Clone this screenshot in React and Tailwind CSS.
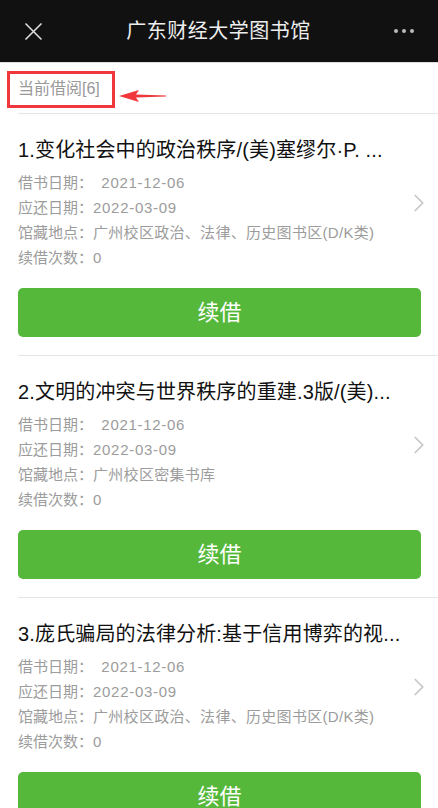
import { ChevronRight } from 'lucide-react';

const books = [
  {
    title: '1.变化社会中的政治秩序/(美)塞缪尔·P. ...',
    lent: '2021-12-06',
    due: '2022-03-09',
    place: '广州校区政治、法律、历史图书区(D/K类)',
    renew: 0,
  },
  {
    title: '2.文明的冲突与世界秩序的重建.3版/(美)...',
    lent: '2021-12-06',
    due: '2022-03-09',
    place: '广州校区密集书库',
    renew: 0,
  },
  {
    title: '3.庞氏骗局的法律分析:基于信用博弈的视...',
    lent: '2021-12-06',
    due: '2022-03-09',
    place: '广州校区政治、法律、历史图书区(D/K类)',
    renew: 0,
  },
];

function BookItem({ book }) {
  return (
    <div className="border-b border-[#e5e5e5] pt-[22px] pb-[18px] pr-[17px]">
      <div className="flex items-center">
        <div className="flex-1 min-w-0">
          <p className="text-[20px] leading-[28px] text-[#111] whitespace-nowrap overflow-hidden tracking-[0.15px]">{book.title}</p>
          <div className="mt-[6px] text-[15px] leading-[25px] text-[#9c9c9c]">
            <p>借书日期：&nbsp;&nbsp;<span className="tracking-[0.7px]">{book.lent}</span></p>
            <p>应还日期：<span className="tracking-[0.7px]">{book.due}</span></p>
            <p className="whitespace-nowrap">馆藏地点：<span className="tracking-[0.3px]">{book.place}</span></p>
            <p>续借次数：{book.renew}</p>
          </div>
        </div>
        <ChevronRight className="w-[30px] h-[30px] text-[#c6c6c6] -mr-[13px]" strokeWidth={1.4} />
      </div>
      <button className="mt-[18px] w-full h-[49px] rounded-[5px] bg-[#55b83b] text-white text-[22px] flex items-center justify-center">
        续借
      </button>
    </div>
  );
}

export default function App() {
  return (
    <div
      className="w-[438px] min-h-[808px] bg-white overflow-hidden"
      style={{ fontFamily: '"Liberation Sans", "Noto Sans CJK SC", sans-serif' }}
    >
      <header className="h-[63px] bg-[#111111] flex items-center justify-between px-[24px] border-b border-[#dcdcdc]">
        <svg width="19" height="19" viewBox="0 0 19 19" className="text-[#dddddd]">
          <path d="M1.5 1.5 L17.5 17.5 M17.5 1.5 L1.5 17.5" stroke="currentColor" strokeWidth="1.6" fill="none" />
        </svg>
        <h1 className="text-[20px] text-[#eeeeee] tracking-[0.5px]">广东财经大学图书馆</h1>
        <div className="flex gap-[4px] items-center">
          <span className="w-[4px] h-[4px] rounded-full bg-[#bbbbbb]" />
          <span className="w-[4px] h-[4px] rounded-full bg-[#bbbbbb]" />
          <span className="w-[4px] h-[4px] rounded-full bg-[#bbbbbb]" />
        </div>
      </header>

      <div className="pl-[18px]">
        <div className="relative h-[51px] flex items-center border-b border-[#e5e5e5]">
          <span className="text-[16px] text-[#999] pt-[2px]">当前借阅[6]</span>
          <div className="absolute left-[-11px] top-[8px] w-[108px] h-[37px] border-[3px] border-[#f0383c]" />
          <svg className="absolute left-[101px] top-[26px]" width="48" height="14" viewBox="0 0 48 14">
            <path d="M0 7 L20 1 L17 5.5 L47 6.5 L47 7.5 L17 8.5 L20 13 Z" fill="#f0383c" />
          </svg>
        </div>
        {books.map((b, i) => (
          <BookItem key={i} book={b} />
        ))}
      </div>
    </div>
  );
}
